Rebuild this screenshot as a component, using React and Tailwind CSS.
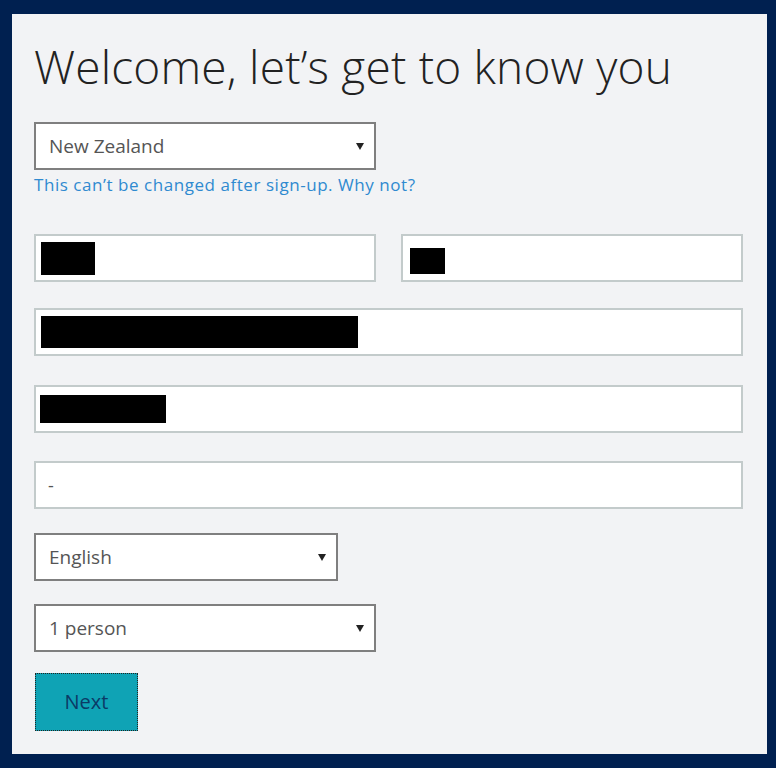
import React from 'react';

const Caret = () => (
  <svg width="8" height="7" viewBox="0 0 8 7" className="shrink-0">
    <path d="M0 0 H8 L4 7 Z" fill="#222" />
  </svg>
);

const Select = ({ value, width }) => (
  <div className={`flex items-center justify-between h-12 border-2 border-[#7f7f7f] bg-white pl-[13px] pr-[10px] ${width}`}>
    <span className="text-[19px] text-[#555]">{value}</span>
    <Caret />
  </div>
);

const Field = ({ children, className = '' }) => (
  <div className={`flex items-center h-12 border-2 border-[#c3cbcb] bg-white ${className}`}>
    {children}
  </div>
);

const Redacted = ({ w, h, ml }) => <div className={`bg-black ${w} ${h} ${ml}`} />;

export default function App() {
  return (
    <div className="w-[776px] h-[768px] bg-[#002050] pt-[14px] pl-[12px] pr-[9px] pb-[14px] font-['Open_Sans','Noto_Sans',sans-serif]">
      <div className="h-full bg-[#f2f3f5] pl-[22px] pr-[24px] pt-[22px]">
        <h1 className="text-[46px] font-light leading-[60px] text-[#222] tracking-[0.2px]">
          Welcome, let’s get to know you
        </h1>

        <div className="mt-[26px]">
          <Select value="New Zealand" width="w-[342px]" />
        </div>
        <p className="mt-[3px] text-[17px] leading-6 text-[#2f8ad0] tracking-[0.55px]">
          This can’t be changed after sign-up. Why not?
        </p>

        <div className="mt-[37px] flex gap-[25px]">
          <Field className="w-[342px]">
            <Redacted w="w-[54px]" h="h-[33px]" ml="ml-[5px]" />
          </Field>
          <Field className="w-[342px]">
            <Redacted w="w-[35px]" h="h-[26px]" ml="ml-[7px] mt-[6px]" />
          </Field>
        </div>

        <Field className="mt-[26px]">
          <Redacted w="w-[317px]" h="h-[32px]" ml="ml-[5px]" />
        </Field>

        <Field className="mt-[29px]">
          <Redacted w="w-[126px]" h="h-[28px]" ml="ml-[4px]" />
        </Field>

        <Field className="mt-[28px]">
          <span className="ml-[12px] text-[18px] text-[#555]">-</span>
        </Field>

        <div className="mt-[24px]">
          <Select value="English" width="w-[304px]" />
        </div>

        <div className="mt-[23px]">
          <Select value="1 person" width="w-[342px]" />
        </div>

        <button className="mt-[21px] ml-px w-[103px] h-[58px] bg-[#0fa3b5] border border-dotted border-[#222] text-[20px] text-[#0b3a66]">
          Next
        </button>
      </div>
    </div>
  );
}
